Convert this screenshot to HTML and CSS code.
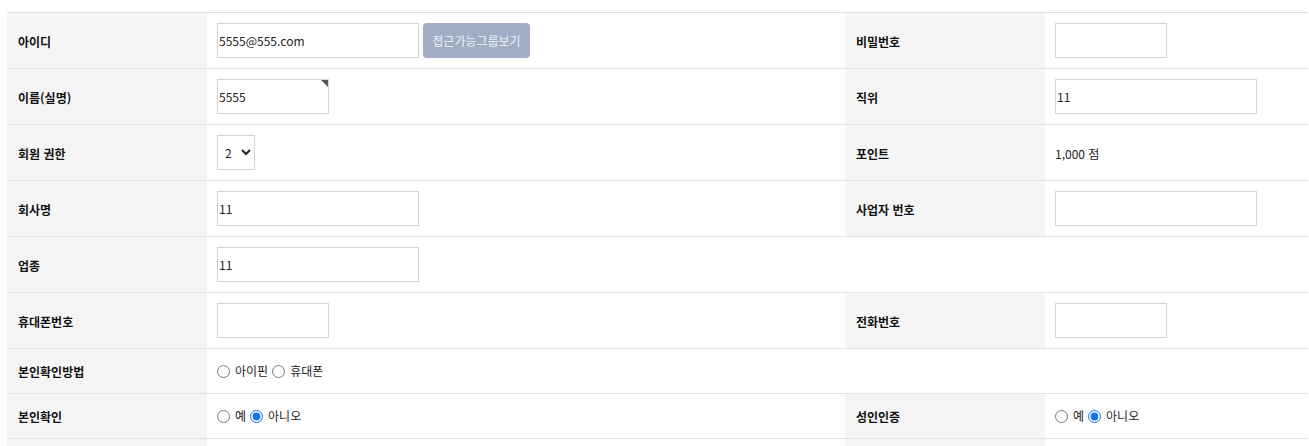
FILE: index.html
```html
<!DOCTYPE html>
<html lang="ko">
<head>
<meta charset="utf-8">
<title>회원 정보</title>
<link rel="stylesheet" href="styles.css">
</head>
<body>
<div class="wrap">
<table class="form">
  <colgroup>
    <col class="c-th"><col class="c-td"><col class="c-th"><col class="c-td2">
  </colgroup>
  <tbody>
    <tr>
      <th>아이디</th>
      <td><input class="inp inp-l" type="text" value="5555@555.com"><button class="btn" type="button">접근가능그룹보기</button></td>
      <th>비밀번호</th>
      <td><input class="inp inp-s" type="password" value=""></td>
    </tr>
    <tr>
      <th>이름(실명)</th>
      <td><span class="mark-wrap"><input class="inp inp-s" type="text" value="5555"><span class="mark"></span></span></td>
      <th>직위</th>
      <td><input class="inp inp-l" type="text" value="11"></td>
    </tr>
    <tr>
      <th>회원 권한</th>
      <td><select class="sel"><option>2</option></select></td>
      <th>포인트</th>
      <td class="txt">1,000 점</td>
    </tr>
    <tr>
      <th>회사명</th>
      <td><input class="inp inp-l" type="text" value="11"></td>
      <th>사업자 번호</th>
      <td><input class="inp inp-l" type="text" value=""></td>
    </tr>
    <tr>
      <th>업종</th>
      <td><input class="inp inp-l" type="text" value="11"></td>
      <td class="empty"></td>
      <td class="empty"></td>
    </tr>
    <tr>
      <th>휴대폰번호</th>
      <td><input class="inp inp-s" type="text" value=""></td>
      <th>전화번호</th>
      <td><input class="inp inp-s" type="text" value=""></td>
    </tr>
    <tr class="short">
      <th>본인확인방법</th>
      <td class="txt"><label class="rd"><input type="radio" name="m">아이핀</label><label class="rd"><input type="radio" name="m">휴대폰</label></td>
      <td class="empty"></td>
      <td class="empty"></td>
    </tr>
    <tr class="short">
      <th>본인확인</th>
      <td class="txt"><label class="rd"><input type="radio" name="c">예</label><label class="rd"><input type="radio" name="c" checked>아니오</label></td>
      <th>성인인증</th>
      <td class="txt"><label class="rd"><input type="radio" name="a">예</label><label class="rd"><input type="radio" name="a" checked>아니오</label></td>
    </tr>
    <tr class="short">
      <th>&nbsp;</th>
      <td></td>
      <th>&nbsp;</th>
      <td></td>
    </tr>
  </tbody>
</table>
</div>
</body>
</html>
```

FILE: styles.css
```css
html, body {
  margin: 0;
  padding: 0;
  background: #fff;
}
body {
  font-family: "Noto Sans CJK KR", "Noto Sans", sans-serif;
  font-size: 12px;
  color: #222;
  overflow: hidden;
}
.wrap {
  padding: 12px 0 0 7px;
}
.form {
  width: 1301px;
  border-collapse: collapse;
  table-layout: fixed;
  border-top: 1px solid #dedede;
}
.c-th { width: 200px; }
.c-td { width: 638px; }
.c-td2 { width: 263px; }
.form th,
.form td {
  border-bottom: 1px solid #e3e3e3;
  height: 56px;
  padding: 0 10px;
  vertical-align: middle;
  line-height: 16px;
  box-sizing: border-box;
}
.form tr.short th,
.form tr.short td {
  height: 45px;
}
.form th {
  background: #f5f5f5;
  text-align: left;
  font-weight: 700;
  padding-left: 11px;
  padding-top: 2px;
  color: #111;
}
.form td {
  background: #fff;
  font-size: 12px;
}
.form td.txt {
  padding-top: 2px;
}
.form td.empty {
  background: #fff;
}
.inp {
  box-sizing: border-box;
  height: 35px;
  border: 1px solid #d3d3d3;
  padding: 0 0 0 1px;
  margin: 0;
  font-family: "Noto Sans CJK KR", "Noto Sans", sans-serif;
  font-size: 12px;
  color: #222;
  vertical-align: middle;
  background: #fff;
  outline: none;
}
.inp-l { width: 202px; }
.inp-s { width: 112px; }
.btn {
  box-sizing: border-box;
  height: 35px;
  width: 107px;
  margin: 0 0 0 4px;
  padding: 0;
  border: 0;
  border-radius: 4px;
  background: #a1adc5;
  color: #eef1f6;
  font-family: "Noto Sans CJK KR", "Noto Sans", sans-serif;
  font-size: 12px;
  vertical-align: middle;
}
.mark-wrap {
  position: relative;
  display: inline-block;
  vertical-align: middle;
}
.mark-wrap .inp { display: block; }
.mark {
  position: absolute;
  top: 1px;
  right: 1px;
  width: 0;
  height: 0;
  border-top: 7px solid #555a4d;
  border-left: 7px solid transparent;
}
.sel {
  box-sizing: border-box;
  width: 38px;
  height: 35px;
  border: 1px solid #d3d3d3;
  border-radius: 0;
  background: #fff;
  font-family: "Noto Sans CJK KR", "Noto Sans", sans-serif;
  font-size: 12px;
  color: #222;
  padding: 0 0 0 3px;
  margin: 0;
  vertical-align: middle;
}
.rd {
  display: inline-flex;
  align-items: center;
  margin-right: 4px;
  color: #222;
}
.rd input {
  width: 13px;
  height: 13px;
  margin: 0 5px 0 0;
  accent-color: #1a73e8;
}
```
